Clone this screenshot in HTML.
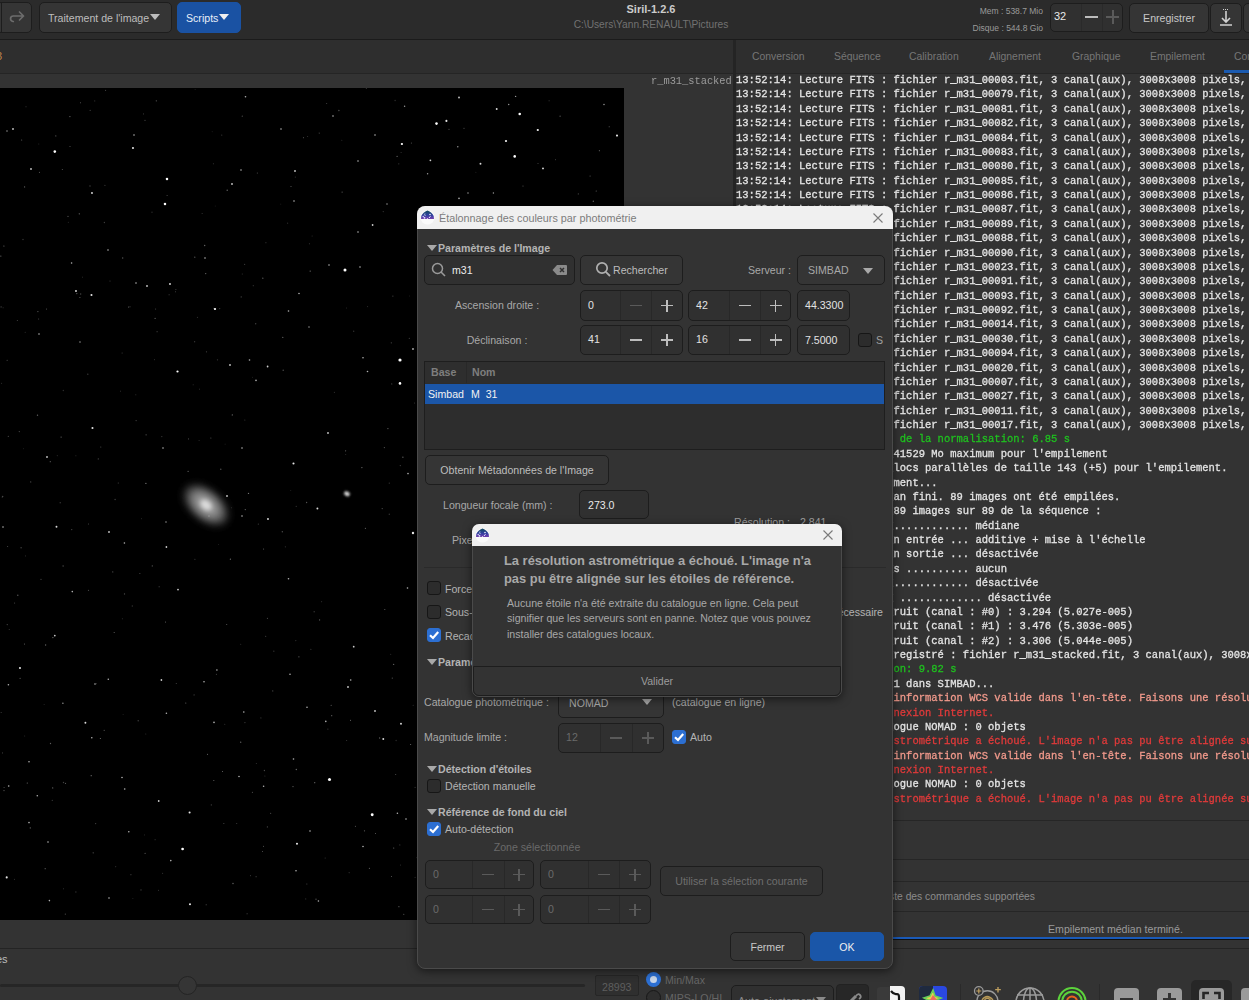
<!DOCTYPE html><html><head><meta charset="utf-8"><style>
*{margin:0;padding:0;box-sizing:border-box}
html,body{width:1249px;height:1000px;overflow:hidden;background:#303030;font-family:"Liberation Sans",sans-serif;font-size:10.6px;color:#c8c8c8}
.a{position:absolute}
.t{position:absolute;white-space:pre;line-height:1}
.btn{position:absolute;border:1px solid #1d1d1d;border-radius:5px;background:#353535;color:#c4c4c4;display:flex;align-items:center;justify-content:center;white-space:pre}
.ent{position:absolute;border:1px solid #1d1d1d;border-radius:5px;background:#2f2f2f;color:#dcdcdc;white-space:pre}
.sep{position:absolute;background:#232323}
.chk{position:absolute;width:14px;height:14px;border:1px solid #161616;border-radius:3px;background:#2c2c2c}
.chk.on{background:#2c6fd2;border-color:#2c6fd2}
.log{position:absolute;left:736px;top:72px;font-family:"Liberation Mono",monospace;font-size:11px;line-height:14.37px;white-space:pre;color:#e4e4e4;font-weight:normal;-webkit-text-stroke:0.3px;transform:scaleX(0.9545);transform-origin:0 0}
.g{color:#1fc01f}.r{color:#e03a3a}.s{color:#f29a8c}
.dlg{position:absolute;background:#333333;border:1px solid #4a4a4a;border-radius:8px;box-shadow:0 2px 10px rgba(0,0,0,.55)}
.ttl{position:absolute;left:0;top:0;right:0;background:#f0f0f0;border-radius:7px 7px 0 0}
.hdr{position:absolute;font-weight:bold;color:#bdbdbd;white-space:pre}
.tri{position:absolute;width:0;height:0;border-left:5px solid transparent;border-right:5px solid transparent;border-top:6px solid #a9a9a9}
</style></head><body><div class="a" style="left:0;top:0;width:1249px;height:39px;background:#2b2b2b"></div>
<div class="a" style="left:0;top:39px;width:1249px;height:1px;background:#1b1b1b"></div>
<div class="btn" style="left:-4px;top:2px;width:36px;height:31px"></div>
<div class="a" style="left:1px;top:3px;width:1px;height:29px;background:#1d1d1d"></div>
<svg class="a" style="left:9px;top:10px" width="17" height="14" viewBox="0 0 17 14"><path d="M4.3 11.5 A2.75 2.75 0 0 1 4.3 6 H14.5 M10.5 2 L14.5 6 L10.5 10" fill="none" stroke="#6c6c6c" stroke-width="1.7" stroke-linecap="round" stroke-linejoin="round"/></svg>
<div class="btn" style="left:39px;top:2px;width:133px;height:31px;justify-content:flex-start;padding-left:8px;color:#bdbdbd">Traitement de l'image</div>
<div class="tri" style="left:150px;top:14px;border-top-color:#bdbdbd"></div>
<div class="btn" style="left:177px;top:2px;width:64px;height:31px;background:#1a52a3;border-color:#1a52a3;justify-content:flex-start;padding-left:8px;color:#e8eef8">Scripts</div>
<div class="tri" style="left:219px;top:14px;border-top-color:#f0f0f0"></div>
<div class="t" style="left:551px;width:200px;top:4px;text-align:center;font-weight:bold;font-size:11px;color:#cccccc">Siril-1.2.6</div>
<div class="t" style="left:551px;width:200px;top:20px;text-align:center;font-size:10.2px;color:#727272">C:\Users\Yann.RENAULT\Pictures</div>
<div class="t" style="left:943px;width:100px;top:7px;text-align:right;font-size:8.5px;color:#9a9a9a">Mem : 538.7 Mio</div>
<div class="t" style="left:943px;width:100px;top:24px;text-align:right;font-size:8.5px;color:#9a9a9a">Disque : 544.8 Gio</div>
<div class="ent" style="left:1050px;top:3px;width:73px;height:29px;background:#303030"></div>
<div class="sep" style="left:1081px;top:4px;width:1px;height:27px;background:#2a2a2a"></div>
<div class="sep" style="left:1102px;top:4px;width:1px;height:27px;background:#2a2a2a"></div>
<div class="t" style="left:1054px;top:11px;font-size:11px;color:#e8e8e8">32</div>
<div class="a" style="left:1085px;top:16px;width:13px;height:2px;background:#bcbcbc"></div>
<div class="a" style="left:1106px;top:16px;width:13px;height:1.5px;background:#5a5a5a"></div>
<div class="a" style="left:1112px;top:10px;width:1.5px;height:14px;background:#5a5a5a"></div>
<div class="btn" style="left:1129px;top:3px;width:80px;height:30px;color:#c8c8c8">Enregistrer</div>
<div class="btn" style="left:1210px;top:3px;width:32px;height:30px"></div>
<svg class="a" style="left:1217px;top:8px" width="18" height="20" viewBox="0 0 18 20"><path d="M9 3 V14 M5 10 L9 14 L13 10 M3 17 H15" fill="none" stroke="#d0d0d0" stroke-width="1.6"/><path d="M6 1.5 H12" stroke="#d0d0d0" stroke-width="1" stroke-dasharray="1 1"/></svg>
<div class="btn" style="left:1243px;top:3px;width:20px;height:30px"></div>
<div class="a" style="left:0;top:40px;width:733px;height:33px;background:#2e2e2e"></div>
<div class="a" style="left:0;top:73px;width:733px;height:1px;background:#252525"></div>
<div class="a" style="left:0;top:74px;width:733px;height:874px;background:#333333"></div>
<div class="t" style="left:-4px;top:51px;font-size:11px;color:#c0864a">3</div>
<div class="t" style="left:651px;top:75px;font-family:'Liberation Mono';font-size:11.5px;color:#9c9c9c;transform:scaleX(0.9);transform-origin:0 0">r_m31_stacked</div>
<svg class="a" style="left:0;top:88px" width="624" height="832" viewBox="0 0 624 832"><defs><filter id="bl" x="-50%" y="-50%" width="200%" height="200%"><feGaussianBlur stdDeviation="4.5"/></filter><filter id="bl2" x="-50%" y="-50%" width="200%" height="200%"><feGaussianBlur stdDeviation="2"/></filter><filter id="bl3" x="-50%" y="-50%" width="200%" height="200%"><feGaussianBlur stdDeviation="1"/></filter></defs><rect width="624" height="832" fill="#000"/><g transform="rotate(40 206 417)"><ellipse cx="206" cy="417" rx="25" ry="14" fill="#555" filter="url(#bl)"/><ellipse cx="206" cy="417" rx="16" ry="9.5" fill="#9a9a9a" filter="url(#bl)"/><ellipse cx="206" cy="417" rx="6.5" ry="4.5" fill="#dcdcdc" filter="url(#bl2)"/></g><ellipse cx="347" cy="405.7" rx="3" ry="2.3" fill="#d0d0d0" filter="url(#bl3)" transform="rotate(30 347 405.7)"/><circle cx="202.1" cy="125.5" r="0.47" fill="rgb(90,90,90)"/><circle cx="334.4" cy="304.3" r="0.58" fill="rgb(49,49,49)"/><circle cx="23.4" cy="360.8" r="0.47" fill="rgb(50,50,50)"/><circle cx="264.9" cy="687.9" r="0.51" fill="rgb(54,54,54)"/><circle cx="391.5" cy="788.5" r="0.55" fill="rgb(85,85,85)"/><circle cx="609.2" cy="38.8" r="0.52" fill="rgb(105,105,105)"/><circle cx="90.0" cy="98.0" r="0.65" fill="rgb(67,67,67)"/><circle cx="112.8" cy="483.9" r="0.54" fill="rgb(89,89,89)"/><circle cx="341.8" cy="52.2" r="0.50" fill="rgb(50,50,50)"/><circle cx="424.6" cy="355.8" r="0.60" fill="rgb(67,67,67)"/><circle cx="282.8" cy="249.4" r="0.62" fill="rgb(100,100,100)"/><circle cx="152.3" cy="477.9" r="0.67" fill="rgb(82,82,82)"/><circle cx="455.2" cy="239.6" r="0.48" fill="rgb(113,113,113)"/><circle cx="260.9" cy="629.9" r="0.57" fill="rgb(56,56,56)"/><circle cx="24.5" cy="556.0" r="0.59" fill="rgb(98,98,98)"/><circle cx="546.3" cy="261.0" r="0.60" fill="rgb(93,93,93)"/><circle cx="361.9" cy="379.6" r="0.69" fill="rgb(103,103,103)"/><circle cx="295.8" cy="552.6" r="0.63" fill="rgb(50,50,50)"/><circle cx="403.8" cy="826.3" r="0.52" fill="rgb(102,102,102)"/><circle cx="240.7" cy="556.3" r="0.57" fill="rgb(47,47,47)"/><circle cx="104.9" cy="97.4" r="0.64" fill="rgb(49,49,49)"/><circle cx="80.7" cy="206.0" r="0.67" fill="rgb(72,72,72)"/><circle cx="50.3" cy="373.7" r="0.67" fill="rgb(83,83,83)"/><circle cx="511.2" cy="718.8" r="0.55" fill="rgb(65,65,65)"/><circle cx="223.9" cy="735.6" r="0.49" fill="rgb(111,111,111)"/><circle cx="110.0" cy="193.0" r="0.57" fill="rgb(61,61,61)"/><circle cx="367.6" cy="218.6" r="0.55" fill="rgb(46,46,46)"/><circle cx="230.4" cy="471.2" r="0.62" fill="rgb(111,111,111)"/><circle cx="321.7" cy="513.8" r="0.46" fill="rgb(92,92,92)"/><circle cx="561.3" cy="648.9" r="0.65" fill="rgb(106,106,106)"/><circle cx="244.8" cy="332.0" r="0.61" fill="rgb(53,53,53)"/><circle cx="38.8" cy="56.0" r="0.49" fill="rgb(60,60,60)"/><circle cx="212.2" cy="43.7" r="0.49" fill="rgb(45,45,45)"/><circle cx="63.3" cy="302.5" r="0.67" fill="rgb(47,47,47)"/><circle cx="383.2" cy="123.6" r="0.54" fill="rgb(63,63,63)"/><circle cx="227.2" cy="102.2" r="0.70" fill="rgb(104,104,104)"/><circle cx="290.8" cy="402.6" r="0.48" fill="rgb(51,51,51)"/><circle cx="213.8" cy="220.3" r="0.49" fill="rgb(102,102,102)"/><circle cx="14.4" cy="791.2" r="0.49" fill="rgb(82,82,82)"/><circle cx="338.9" cy="22.5" r="0.69" fill="rgb(82,82,82)"/><circle cx="538.7" cy="579.2" r="0.54" fill="rgb(63,63,63)"/><circle cx="104.2" cy="642.3" r="0.64" fill="rgb(82,82,82)"/><circle cx="205.7" cy="185.6" r="0.70" fill="rgb(101,101,101)"/><circle cx="532.0" cy="670.7" r="0.63" fill="rgb(102,102,102)"/><circle cx="141.5" cy="430.7" r="0.46" fill="rgb(70,70,70)"/><circle cx="17.4" cy="232.5" r="0.62" fill="rgb(63,63,63)"/><circle cx="596.9" cy="372.1" r="0.70" fill="rgb(110,110,110)"/><circle cx="595.9" cy="303.4" r="0.51" fill="rgb(61,61,61)"/><circle cx="122.7" cy="170.0" r="0.68" fill="rgb(88,88,88)"/><circle cx="524.4" cy="398.9" r="0.65" fill="rgb(90,90,90)"/><circle cx="52.9" cy="549.6" r="0.65" fill="rgb(108,108,108)"/><circle cx="468.1" cy="397.7" r="0.65" fill="rgb(58,58,58)"/><circle cx="207.5" cy="666.3" r="0.55" fill="rgb(112,112,112)"/><circle cx="250.5" cy="787.7" r="0.49" fill="rgb(95,95,95)"/><circle cx="79.3" cy="125.8" r="0.65" fill="rgb(108,108,108)"/><circle cx="91.2" cy="687.7" r="0.61" fill="rgb(113,113,113)"/><circle cx="218.7" cy="456.5" r="0.45" fill="rgb(54,54,54)"/><circle cx="605.8" cy="540.5" r="0.68" fill="rgb(82,82,82)"/><circle cx="270.7" cy="725.3" r="0.50" fill="rgb(102,102,102)"/><circle cx="157.1" cy="243.7" r="0.60" fill="rgb(62,62,62)"/><circle cx="161.8" cy="348.6" r="0.68" fill="rgb(54,54,54)"/><circle cx="220.8" cy="381.2" r="0.68" fill="rgb(86,86,86)"/><circle cx="262.5" cy="763.5" r="0.58" fill="rgb(80,80,80)"/><circle cx="326.7" cy="15.6" r="0.50" fill="rgb(76,76,76)"/><circle cx="2.5" cy="664.9" r="0.57" fill="rgb(57,57,57)"/><circle cx="452.5" cy="463.0" r="0.58" fill="rgb(68,68,68)"/><circle cx="346.6" cy="652.5" r="0.59" fill="rgb(53,53,53)"/><circle cx="155.1" cy="230.4" r="0.58" fill="rgb(99,99,99)"/><circle cx="350.5" cy="632.3" r="0.56" fill="rgb(108,108,108)"/><circle cx="382.2" cy="420.6" r="0.62" fill="rgb(81,81,81)"/><circle cx="282.3" cy="443.7" r="0.69" fill="rgb(78,78,78)"/><circle cx="436.3" cy="729.3" r="0.51" fill="rgb(110,110,110)"/><circle cx="349.1" cy="784.8" r="0.48" fill="rgb(103,103,103)"/><circle cx="75.9" cy="367.8" r="0.51" fill="rgb(50,50,50)"/><circle cx="45.6" cy="557.0" r="0.67" fill="rgb(99,99,99)"/><circle cx="96.4" cy="595.8" r="0.49" fill="rgb(91,91,91)"/><circle cx="550.9" cy="805.0" r="0.69" fill="rgb(61,61,61)"/><circle cx="248.5" cy="405.4" r="0.66" fill="rgb(114,114,114)"/><circle cx="100.8" cy="359.0" r="0.53" fill="rgb(81,81,81)"/><circle cx="122.1" cy="265.0" r="0.45" fill="rgb(95,95,95)"/><circle cx="345.7" cy="366.5" r="0.53" fill="rgb(47,47,47)"/><circle cx="389.3" cy="426.2" r="0.70" fill="rgb(50,50,50)"/><circle cx="491.9" cy="808.5" r="0.52" fill="rgb(53,53,53)"/><circle cx="24.7" cy="648.1" r="0.48" fill="rgb(64,64,64)"/><circle cx="263.5" cy="758.3" r="0.51" fill="rgb(102,102,102)"/><circle cx="93.2" cy="764.8" r="0.63" fill="rgb(85,85,85)"/><circle cx="55.8" cy="47.9" r="0.56" fill="rgb(93,93,93)"/><circle cx="45.2" cy="780.7" r="0.65" fill="rgb(89,89,89)"/><circle cx="52.3" cy="712.4" r="0.67" fill="rgb(50,50,50)"/><circle cx="283.2" cy="282.2" r="0.68" fill="rgb(83,83,83)"/><circle cx="167.1" cy="107.5" r="0.51" fill="rgb(82,82,82)"/><circle cx="68.3" cy="134.3" r="0.50" fill="rgb(49,49,49)"/><circle cx="194.7" cy="253.8" r="0.52" fill="rgb(98,98,98)"/><circle cx="312.1" cy="148.0" r="0.45" fill="rgb(69,69,69)"/><circle cx="156.3" cy="12.8" r="0.59" fill="rgb(96,96,96)"/><circle cx="118.2" cy="395.0" r="0.48" fill="rgb(110,110,110)"/><circle cx="511.0" cy="359.6" r="0.66" fill="rgb(79,79,79)"/><circle cx="245.3" cy="421.6" r="0.70" fill="rgb(93,93,93)"/><circle cx="213.8" cy="692.5" r="0.61" fill="rgb(94,94,94)"/><circle cx="252.5" cy="289.2" r="0.48" fill="rgb(49,49,49)"/><circle cx="44.1" cy="616.4" r="0.49" fill="rgb(63,63,63)"/><circle cx="52.7" cy="699.9" r="0.62" fill="rgb(105,105,105)"/><circle cx="175.9" cy="201.5" r="0.56" fill="rgb(66,66,66)"/><circle cx="98.3" cy="370.9" r="0.69" fill="rgb(64,64,64)"/><circle cx="606.9" cy="455.2" r="0.69" fill="rgb(62,62,62)"/><circle cx="193.2" cy="296.7" r="0.55" fill="rgb(45,45,45)"/><circle cx="296.2" cy="418.3" r="0.58" fill="rgb(59,59,59)"/><circle cx="3.1" cy="219.8" r="0.55" fill="rgb(52,52,52)"/><circle cx="26.0" cy="18.7" r="0.51" fill="rgb(66,66,66)"/><circle cx="365.4" cy="440.3" r="0.61" fill="rgb(97,97,97)"/><circle cx="446.8" cy="731.4" r="0.53" fill="rgb(72,72,72)"/><circle cx="614.5" cy="124.4" r="0.61" fill="rgb(95,95,95)"/><circle cx="27.3" cy="695.0" r="0.61" fill="rgb(107,107,107)"/><circle cx="457.9" cy="675.8" r="0.58" fill="rgb(55,55,55)"/><circle cx="314.7" cy="694.7" r="0.66" fill="rgb(101,101,101)"/><circle cx="364.5" cy="742.8" r="0.62" fill="rgb(92,92,92)"/><circle cx="143.5" cy="25.9" r="0.54" fill="rgb(55,55,55)"/><circle cx="65.5" cy="695.4" r="0.61" fill="rgb(84,84,84)"/><circle cx="390.8" cy="566.3" r="0.45" fill="rgb(79,79,79)"/><circle cx="497.8" cy="622.6" r="0.58" fill="rgb(80,80,80)"/><circle cx="411.4" cy="55.0" r="0.51" fill="rgb(96,96,96)"/><circle cx="46.5" cy="220.9" r="0.50" fill="rgb(96,96,96)"/><circle cx="461.7" cy="811.8" r="0.55" fill="rgb(79,79,79)"/><circle cx="298.9" cy="568.8" r="0.60" fill="rgb(98,98,98)"/><circle cx="401.1" cy="64.5" r="0.51" fill="rgb(56,56,56)"/><circle cx="463.8" cy="253.3" r="0.45" fill="rgb(84,84,84)"/><circle cx="37.9" cy="223.6" r="0.62" fill="rgb(92,92,92)"/><circle cx="421.6" cy="242.0" r="0.57" fill="rgb(81,81,81)"/><circle cx="291.0" cy="98.6" r="0.50" fill="rgb(107,107,107)"/><circle cx="610.4" cy="779.0" r="0.56" fill="rgb(47,47,47)"/><circle cx="511.6" cy="805.5" r="0.52" fill="rgb(76,76,76)"/><circle cx="130.9" cy="786.7" r="0.60" fill="rgb(60,60,60)"/><circle cx="88.4" cy="436.0" r="0.48" fill="rgb(111,111,111)"/><circle cx="511.8" cy="423.3" r="0.63" fill="rgb(106,106,106)"/><circle cx="144.4" cy="746.9" r="0.46" fill="rgb(79,79,79)"/><circle cx="2.2" cy="409.1" r="0.53" fill="rgb(76,76,76)"/><circle cx="87.8" cy="286.2" r="0.66" fill="rgb(67,67,67)"/><circle cx="1.1" cy="624.6" r="0.48" fill="rgb(103,103,103)"/><circle cx="578.1" cy="593.2" r="0.52" fill="rgb(107,107,107)"/><circle cx="232.3" cy="326.9" r="0.60" fill="rgb(114,114,114)"/><circle cx="225.1" cy="356.1" r="0.46" fill="rgb(64,64,64)"/><circle cx="63.5" cy="694.5" r="0.68" fill="rgb(65,65,65)"/><circle cx="155.6" cy="221.1" r="0.50" fill="rgb(81,81,81)"/><circle cx="233.0" cy="795.5" r="0.65" fill="rgb(106,106,106)"/><circle cx="393.7" cy="760.0" r="0.59" fill="rgb(110,110,110)"/><circle cx="449.0" cy="41.2" r="0.56" fill="rgb(96,96,96)"/><circle cx="469.7" cy="536.2" r="0.46" fill="rgb(65,65,65)"/><circle cx="578.3" cy="105.9" r="0.54" fill="rgb(78,78,78)"/><circle cx="185.8" cy="614.9" r="0.52" fill="rgb(113,113,113)"/><circle cx="409.3" cy="250.3" r="0.55" fill="rgb(84,84,84)"/><circle cx="104.4" cy="134.5" r="0.68" fill="rgb(60,60,60)"/><circle cx="310.2" cy="183.1" r="0.70" fill="rgb(108,108,108)"/><circle cx="280.8" cy="116.1" r="0.47" fill="rgb(59,59,59)"/><circle cx="213.4" cy="75.8" r="0.51" fill="rgb(62,62,62)"/><circle cx="355.4" cy="738.2" r="0.55" fill="rgb(97,97,97)"/><circle cx="258.3" cy="436.1" r="0.53" fill="rgb(71,71,71)"/><circle cx="38.7" cy="230.9" r="0.48" fill="rgb(112,112,112)"/><circle cx="314.1" cy="523.8" r="0.50" fill="rgb(105,105,105)"/><circle cx="169.1" cy="206.7" r="0.56" fill="rgb(73,73,73)"/><circle cx="595.3" cy="706.1" r="0.46" fill="rgb(105,105,105)"/><circle cx="20.1" cy="590.3" r="0.57" fill="rgb(107,107,107)"/><circle cx="366.4" cy="0.1" r="0.68" fill="rgb(72,72,72)"/><circle cx="515.2" cy="711.7" r="0.51" fill="rgb(112,112,112)"/><circle cx="68.0" cy="128.4" r="0.62" fill="rgb(81,81,81)"/><circle cx="587.5" cy="600.5" r="0.64" fill="rgb(90,90,90)"/><circle cx="285.4" cy="458.8" r="0.65" fill="rgb(48,48,48)"/><circle cx="145.1" cy="765.4" r="0.53" fill="rgb(90,90,90)"/><circle cx="79.9" cy="209.5" r="0.62" fill="rgb(89,89,89)"/><circle cx="70.0" cy="58.5" r="0.60" fill="rgb(82,82,82)"/><circle cx="242.2" cy="186.0" r="0.45" fill="rgb(87,87,87)"/><circle cx="188.1" cy="383.3" r="0.61" fill="rgb(111,111,111)"/><circle cx="551.5" cy="395.5" r="0.51" fill="rgb(62,62,62)"/><circle cx="599.4" cy="586.3" r="0.46" fill="rgb(67,67,67)"/><circle cx="310.9" cy="561.2" r="0.51" fill="rgb(74,74,74)"/><circle cx="416.4" cy="769.7" r="0.46" fill="rgb(61,61,61)"/><circle cx="210.9" cy="349.9" r="0.50" fill="rgb(92,92,92)"/><circle cx="497.4" cy="615.0" r="0.50" fill="rgb(80,80,80)"/><circle cx="605.2" cy="259.3" r="0.51" fill="rgb(102,102,102)"/><circle cx="138.2" cy="632.7" r="0.69" fill="rgb(66,66,66)"/><circle cx="309.4" cy="155.8" r="0.55" fill="rgb(61,61,61)"/><circle cx="415.1" cy="789.4" r="0.55" fill="rgb(55,55,55)"/><circle cx="132.9" cy="810.5" r="0.46" fill="rgb(55,55,55)"/><circle cx="37.5" cy="327.2" r="0.67" fill="rgb(107,107,107)"/><circle cx="457.2" cy="829.9" r="0.53" fill="rgb(110,110,110)"/><circle cx="115.8" cy="778.7" r="0.46" fill="rgb(97,97,97)"/><circle cx="414.6" cy="315.0" r="0.53" fill="rgb(71,71,71)"/><circle cx="105.6" cy="2.4" r="0.54" fill="rgb(65,65,65)"/><circle cx="596.2" cy="102.9" r="0.50" fill="rgb(112,112,112)"/><circle cx="222.5" cy="683.5" r="0.56" fill="rgb(102,102,102)"/><circle cx="30.7" cy="393.9" r="0.68" fill="rgb(71,71,71)"/><circle cx="120.4" cy="303.1" r="0.46" fill="rgb(107,107,107)"/><circle cx="256.3" cy="675.4" r="0.46" fill="rgb(98,98,98)"/><circle cx="21.7" cy="52.1" r="0.51" fill="rgb(109,109,109)"/><circle cx="466.3" cy="747.6" r="0.52" fill="rgb(69,69,69)"/><circle cx="597.6" cy="513.3" r="0.63" fill="rgb(63,63,63)"/><circle cx="197.5" cy="229.3" r="0.64" fill="rgb(46,46,46)"/><circle cx="571.9" cy="527.5" r="0.46" fill="rgb(110,110,110)"/><circle cx="145.9" cy="395.4" r="0.69" fill="rgb(111,111,111)"/><circle cx="241.2" cy="208.9" r="0.57" fill="rgb(75,75,75)"/><circle cx="579.1" cy="152.2" r="0.63" fill="rgb(101,101,101)"/><circle cx="513.4" cy="643.0" r="0.53" fill="rgb(87,87,87)"/><circle cx="199.4" cy="301.1" r="0.47" fill="rgb(99,99,99)"/><circle cx="123.1" cy="626.4" r="0.47" fill="rgb(62,62,62)"/><circle cx="21.1" cy="459.8" r="0.70" fill="rgb(68,68,68)"/><circle cx="551.3" cy="821.9" r="0.47" fill="rgb(64,64,64)"/><circle cx="60.2" cy="414.7" r="0.56" fill="rgb(94,94,94)"/><circle cx="146.1" cy="346.8" r="0.62" fill="rgb(88,88,88)"/><circle cx="466.7" cy="704.7" r="0.48" fill="rgb(91,91,91)"/><circle cx="524.7" cy="244.4" r="0.54" fill="rgb(84,84,84)"/><circle cx="460.6" cy="165.7" r="0.51" fill="rgb(62,62,62)"/><circle cx="95.7" cy="735.6" r="0.53" fill="rgb(85,85,85)"/><circle cx="247.1" cy="825.7" r="0.51" fill="rgb(80,80,80)"/><circle cx="504.5" cy="543.6" r="0.48" fill="rgb(114,114,114)"/><circle cx="296.3" cy="681.5" r="0.68" fill="rgb(103,103,103)"/><circle cx="25.2" cy="244.3" r="0.50" fill="rgb(54,54,54)"/><circle cx="607.1" cy="485.2" r="0.54" fill="rgb(109,109,109)"/><circle cx="540.5" cy="373.7" r="0.64" fill="rgb(63,63,63)"/><circle cx="590.1" cy="88.0" r="0.60" fill="rgb(86,86,86)"/><circle cx="135.8" cy="306.8" r="0.50" fill="rgb(55,55,55)"/><circle cx="159.1" cy="498.7" r="0.50" fill="rgb(90,90,90)"/><circle cx="7.1" cy="272.3" r="0.50" fill="rgb(92,92,92)"/><circle cx="194.8" cy="169.2" r="0.59" fill="rgb(100,100,100)"/><circle cx="39.5" cy="84.4" r="0.59" fill="rgb(73,73,73)"/><circle cx="398.8" cy="75.8" r="0.62" fill="rgb(57,57,57)"/><circle cx="255.7" cy="235.7" r="0.69" fill="rgb(67,67,67)"/><circle cx="194.9" cy="471.3" r="0.55" fill="rgb(70,70,70)"/><circle cx="539.3" cy="829.2" r="0.50" fill="rgb(70,70,70)"/><circle cx="454.3" cy="169.5" r="0.68" fill="rgb(46,46,46)"/><circle cx="264.4" cy="682.5" r="0.67" fill="rgb(73,73,73)"/><circle cx="287.6" cy="135.2" r="0.59" fill="rgb(46,46,46)"/><circle cx="399.8" cy="756.9" r="0.61" fill="rgb(52,52,52)"/><circle cx="231.4" cy="419.7" r="0.52" fill="rgb(55,55,55)"/><circle cx="325.2" cy="770.0" r="0.57" fill="rgb(53,53,53)"/><circle cx="502.2" cy="804.4" r="0.48" fill="rgb(59,59,59)"/><circle cx="588.5" cy="811.7" r="0.46" fill="rgb(79,79,79)"/><circle cx="577.9" cy="322.7" r="0.61" fill="rgb(108,108,108)"/><circle cx="514.5" cy="133.3" r="0.51" fill="rgb(100,100,100)"/><circle cx="252.4" cy="704.2" r="0.50" fill="rgb(102,102,102)"/><circle cx="136.1" cy="332.6" r="0.55" fill="rgb(81,81,81)"/><circle cx="76.8" cy="205.6" r="0.67" fill="rgb(95,95,95)"/><circle cx="25.6" cy="467.9" r="0.46" fill="rgb(98,98,98)"/><circle cx="523.0" cy="98.0" r="0.59" fill="rgb(87,87,87)"/><circle cx="391.3" cy="254.8" r="0.60" fill="rgb(74,74,74)"/><circle cx="265.7" cy="548.2" r="0.56" fill="rgb(76,76,76)"/><circle cx="14.6" cy="514.9" r="0.51" fill="rgb(79,79,79)"/><circle cx="476.5" cy="648.9" r="0.49" fill="rgb(77,77,77)"/><circle cx="295.3" cy="89.1" r="0.56" fill="rgb(54,54,54)"/><circle cx="57.2" cy="367.7" r="0.46" fill="rgb(81,81,81)"/><circle cx="397.1" cy="68.4" r="0.64" fill="rgb(96,96,96)"/><circle cx="319.2" cy="45.1" r="0.54" fill="rgb(80,80,80)"/><circle cx="593.3" cy="113.3" r="0.70" fill="rgb(104,104,104)"/><circle cx="456.8" cy="678.1" r="0.70" fill="rgb(59,59,59)"/><circle cx="306.9" cy="795.9" r="0.49" fill="rgb(108,108,108)"/><circle cx="492.0" cy="774.2" r="0.54" fill="rgb(50,50,50)"/><circle cx="471.9" cy="132.1" r="0.52" fill="rgb(107,107,107)"/><circle cx="509.0" cy="119.5" r="0.68" fill="rgb(80,80,80)"/><circle cx="130.0" cy="218.7" r="0.53" fill="rgb(80,80,80)"/><circle cx="23.0" cy="151.5" r="0.68" fill="rgb(57,57,57)"/><circle cx="424.1" cy="745.0" r="0.65" fill="rgb(57,57,57)"/><circle cx="71.8" cy="441.6" r="0.54" fill="rgb(89,89,89)"/><circle cx="544.7" cy="461.9" r="0.67" fill="rgb(85,85,85)"/><circle cx="65.3" cy="826.1" r="0.55" fill="rgb(89,89,89)"/><circle cx="497.7" cy="220.3" r="0.59" fill="rgb(114,114,114)"/><circle cx="224.8" cy="636.2" r="0.49" fill="rgb(76,76,76)"/><circle cx="464.0" cy="40.2" r="0.51" fill="rgb(102,102,102)"/><circle cx="398.9" cy="818.7" r="0.62" fill="rgb(86,86,86)"/><circle cx="195.1" cy="1.5" r="0.49" fill="rgb(48,48,48)"/><circle cx="384.4" cy="359.6" r="0.67" fill="rgb(81,81,81)"/><circle cx="82.4" cy="189.1" r="0.46" fill="rgb(90,90,90)"/><circle cx="1.6" cy="295.3" r="0.54" fill="rgb(53,53,53)"/><circle cx="139.9" cy="485.5" r="0.50" fill="rgb(86,86,86)"/><circle cx="389.3" cy="395.1" r="0.68" fill="rgb(55,55,55)"/><circle cx="152.0" cy="124.2" r="0.61" fill="rgb(52,52,52)"/><circle cx="543.7" cy="650.8" r="0.52" fill="rgb(73,73,73)"/><circle cx="7.2" cy="536.6" r="0.54" fill="rgb(84,84,84)"/><circle cx="402.9" cy="369.2" r="0.63" fill="rgb(110,110,110)"/><circle cx="155.1" cy="751.7" r="0.58" fill="rgb(48,48,48)"/><circle cx="253.3" cy="197.7" r="0.64" fill="rgb(49,49,49)"/><circle cx="7.7" cy="458.4" r="0.49" fill="rgb(110,110,110)"/><circle cx="124.5" cy="505.9" r="0.61" fill="rgb(80,80,80)"/><circle cx="507.5" cy="145.3" r="0.53" fill="rgb(67,67,67)"/><circle cx="30.3" cy="739.9" r="0.63" fill="rgb(99,99,99)"/><circle cx="4.0" cy="702.6" r="0.57" fill="rgb(97,97,97)"/><circle cx="462.9" cy="376.5" r="0.48" fill="rgb(61,61,61)"/><circle cx="145.0" cy="32.3" r="0.64" fill="rgb(69,69,69)"/><circle cx="433.7" cy="703.3" r="0.52" fill="rgb(94,94,94)"/><circle cx="345.6" cy="362.8" r="0.58" fill="rgb(100,100,100)"/><circle cx="165.5" cy="534.1" r="0.50" fill="rgb(112,112,112)"/><circle cx="549.1" cy="12.7" r="0.51" fill="rgb(63,63,63)"/><circle cx="464.2" cy="786.0" r="0.53" fill="rgb(97,97,97)"/><circle cx="549.2" cy="273.4" r="0.68" fill="rgb(62,62,62)"/><circle cx="393.6" cy="576.4" r="0.69" fill="rgb(91,91,91)"/><circle cx="293.0" cy="698.6" r="0.66" fill="rgb(93,93,93)"/><circle cx="272.8" cy="602.9" r="0.53" fill="rgb(85,85,85)"/><circle cx="132.3" cy="518.0" r="0.68" fill="rgb(51,51,51)"/><circle cx="90.2" cy="22.4" r="0.68" fill="rgb(53,53,53)"/><circle cx="215.2" cy="118.0" r="0.46" fill="rgb(47,47,47)"/><circle cx="432.2" cy="527.4" r="0.63" fill="rgb(93,93,93)"/><circle cx="41.0" cy="491.3" r="0.65" fill="rgb(70,70,70)"/><circle cx="511.4" cy="741.5" r="0.67" fill="rgb(50,50,50)"/><circle cx="570.6" cy="785.7" r="0.50" fill="rgb(53,53,53)"/><circle cx="69.9" cy="28.6" r="0.65" fill="rgb(104,104,104)"/><circle cx="395.7" cy="686.5" r="0.52" fill="rgb(89,89,89)"/><circle cx="62.3" cy="81.4" r="0.50" fill="rgb(98,98,98)"/><circle cx="199.1" cy="352.6" r="0.51" fill="rgb(47,47,47)"/><circle cx="176.3" cy="595.5" r="0.53" fill="rgb(71,71,71)"/><circle cx="601.5" cy="419.1" r="0.60" fill="rgb(104,104,104)"/><circle cx="19.3" cy="343.6" r="0.64" fill="rgb(75,75,75)"/><circle cx="216.4" cy="586.3" r="0.50" fill="rgb(82,82,82)"/><circle cx="538.0" cy="75.6" r="0.49" fill="rgb(102,102,102)"/><circle cx="0.8" cy="168.1" r="0.69" fill="rgb(98,98,98)"/><circle cx="2.7" cy="408.4" r="0.65" fill="rgb(79,79,79)"/><circle cx="115.1" cy="411.5" r="0.66" fill="rgb(69,69,69)"/><circle cx="162.6" cy="785.3" r="0.50" fill="rgb(65,65,65)"/><circle cx="436.5" cy="414.6" r="0.61" fill="rgb(53,53,53)"/><circle cx="50.5" cy="655.5" r="0.65" fill="rgb(93,93,93)"/><circle cx="391.8" cy="295.9" r="0.55" fill="rgb(73,73,73)"/><circle cx="555.6" cy="71.7" r="0.46" fill="rgb(107,107,107)"/><circle cx="128.6" cy="219.0" r="0.58" fill="rgb(107,107,107)"/><circle cx="236.7" cy="735.5" r="0.57" fill="rgb(61,61,61)"/><circle cx="331.7" cy="627.7" r="0.61" fill="rgb(97,97,97)"/><circle cx="217.5" cy="271.8" r="0.66" fill="rgb(56,56,56)"/><circle cx="413.2" cy="617.3" r="0.56" fill="rgb(57,57,57)"/><circle cx="482.6" cy="481.9" r="0.57" fill="rgb(54,54,54)"/><circle cx="552.3" cy="198.0" r="0.53" fill="rgb(59,59,59)"/><circle cx="438.8" cy="701.9" r="0.49" fill="rgb(56,56,56)"/><circle cx="154.5" cy="271.7" r="0.49" fill="rgb(81,81,81)"/><circle cx="204.7" cy="157.5" r="0.63" fill="rgb(113,113,113)"/><circle cx="63.5" cy="800.7" r="0.55" fill="rgb(52,52,52)"/><circle cx="613.9" cy="661.3" r="0.56" fill="rgb(96,96,96)"/><circle cx="122.4" cy="530.8" r="0.50" fill="rgb(53,53,53)"/><circle cx="242.3" cy="28.2" r="0.65" fill="rgb(73,73,73)"/><circle cx="432.7" cy="416.4" r="0.57" fill="rgb(89,89,89)"/><circle cx="88.5" cy="502.3" r="0.64" fill="rgb(73,73,73)"/><circle cx="566.6" cy="357.8" r="0.64" fill="rgb(85,85,85)"/><circle cx="262.8" cy="190.2" r="0.67" fill="rgb(95,95,95)"/><circle cx="483.0" cy="582.5" r="0.62" fill="rgb(104,104,104)"/><circle cx="400.3" cy="377.6" r="0.61" fill="rgb(67,67,67)"/><circle cx="61.1" cy="349.1" r="0.63" fill="rgb(99,99,99)"/><circle cx="392.9" cy="208.1" r="0.56" fill="rgb(75,75,75)"/><circle cx="387.9" cy="340.6" r="0.68" fill="rgb(92,92,92)"/><circle cx="114.2" cy="544.5" r="0.55" fill="rgb(99,99,99)"/><circle cx="305.7" cy="810.9" r="0.59" fill="rgb(48,48,48)"/><circle cx="100.4" cy="650.5" r="0.58" fill="rgb(110,110,110)"/><circle cx="63.1" cy="478.0" r="0.63" fill="rgb(83,83,83)"/><circle cx="319.6" cy="531.9" r="0.58" fill="rgb(102,102,102)"/><circle cx="256.1" cy="788.7" r="0.62" fill="rgb(60,60,60)"/><circle cx="244.9" cy="634.6" r="0.70" fill="rgb(54,54,54)"/><circle cx="221.8" cy="47.1" r="0.55" fill="rgb(64,64,64)"/><circle cx="8.3" cy="348.3" r="0.62" fill="rgb(74,74,74)"/><circle cx="219.7" cy="220.6" r="0.64" fill="rgb(61,61,61)"/><circle cx="586.5" cy="438.5" r="0.65" fill="rgb(60,60,60)"/><circle cx="244.6" cy="176.4" r="0.64" fill="rgb(54,54,54)"/><circle cx="505.2" cy="527.7" r="0.59" fill="rgb(78,78,78)"/><circle cx="141.0" cy="801.9" r="0.61" fill="rgb(70,70,70)"/><circle cx="510.9" cy="679.1" r="0.52" fill="rgb(78,78,78)"/><circle cx="342.1" cy="104.1" r="0.54" fill="rgb(103,103,103)"/><circle cx="530.8" cy="222.5" r="0.51" fill="rgb(71,71,71)"/><circle cx="265.9" cy="154.7" r="0.63" fill="rgb(46,46,46)"/><circle cx="175.5" cy="203.8" r="0.57" fill="rgb(66,66,66)"/><circle cx="267.4" cy="530.2" r="0.54" fill="rgb(91,91,91)"/><circle cx="579.5" cy="710.9" r="0.66" fill="rgb(49,49,49)"/><circle cx="565.2" cy="652.3" r="0.66" fill="rgb(55,55,55)"/><circle cx="395.1" cy="12.5" r="0.69" fill="rgb(46,46,46)"/><circle cx="409.3" cy="208.0" r="0.49" fill="rgb(52,52,52)"/><circle cx="145.8" cy="645.9" r="0.49" fill="rgb(69,69,69)"/><circle cx="564.2" cy="658.7" r="0.67" fill="rgb(57,57,57)"/><circle cx="379.6" cy="650.0" r="0.67" fill="rgb(91,91,91)"/><circle cx="491.8" cy="697.9" r="0.62" fill="rgb(59,59,59)"/><circle cx="331.2" cy="617.3" r="0.67" fill="rgb(76,76,76)"/><circle cx="346.4" cy="220.1" r="0.48" fill="rgb(62,62,62)"/><circle cx="307.7" cy="48.6" r="0.49" fill="rgb(78,78,78)"/><circle cx="306.6" cy="414.5" r="0.67" fill="rgb(83,83,83)"/><circle cx="4.1" cy="699.5" r="0.59" fill="rgb(78,78,78)"/><circle cx="415.1" cy="699.4" r="0.55" fill="rgb(71,71,71)"/><circle cx="599.4" cy="62.7" r="0.61" fill="rgb(89,89,89)"/><circle cx="17.8" cy="507.2" r="0.68" fill="rgb(92,92,92)"/><circle cx="206.2" cy="816.8" r="0.57" fill="rgb(81,81,81)"/><circle cx="560.1" cy="28.2" r="0.61" fill="rgb(95,95,95)"/><circle cx="211.3" cy="716.9" r="0.57" fill="rgb(71,71,71)"/><circle cx="327.9" cy="641.1" r="0.56" fill="rgb(60,60,60)"/><circle cx="263.6" cy="461.0" r="0.52" fill="rgb(102,102,102)"/><circle cx="516.5" cy="335.9" r="0.52" fill="rgb(80,80,80)"/><circle cx="316.0" cy="811.2" r="0.65" fill="rgb(90,90,90)"/><circle cx="206.5" cy="263.8" r="0.60" fill="rgb(66,66,66)"/><circle cx="396.1" cy="652.5" r="0.63" fill="rgb(48,48,48)"/><circle cx="552.6" cy="453.8" r="0.53" fill="rgb(49,49,49)"/><circle cx="3.9" cy="158.0" r="0.60" fill="rgb(109,109,109)"/><circle cx="410.6" cy="656.5" r="0.60" fill="rgb(108,108,108)"/><circle cx="384.8" cy="521.5" r="0.60" fill="rgb(93,93,93)"/><circle cx="424.9" cy="176.8" r="0.56" fill="rgb(91,91,91)"/><circle cx="475.9" cy="84.3" r="0.46" fill="rgb(58,58,58)"/><circle cx="483.3" cy="760.5" r="0.54" fill="rgb(91,91,91)"/><circle cx="513.3" cy="654.4" r="0.51" fill="rgb(84,84,84)"/><circle cx="188.5" cy="350.9" r="0.56" fill="rgb(67,67,67)"/><circle cx="400.5" cy="777.0" r="0.59" fill="rgb(49,49,49)"/><circle cx="24.6" cy="98.9" r="0.59" fill="rgb(101,101,101)"/><circle cx="573.2" cy="371.5" r="0.55" fill="rgb(46,46,46)"/><circle cx="369.4" cy="780.2" r="0.57" fill="rgb(113,113,113)"/><circle cx="257.3" cy="84.9" r="0.50" fill="rgb(90,90,90)"/><circle cx="94.7" cy="12.9" r="0.62" fill="rgb(46,46,46)"/><circle cx="75.9" cy="804.0" r="0.67" fill="rgb(51,51,51)"/><circle cx="80.5" cy="14.8" r="0.51" fill="rgb(95,95,95)"/><circle cx="457.7" cy="155.9" r="0.64" fill="rgb(49,49,49)"/><circle cx="445.3" cy="711.8" r="0.47" fill="rgb(96,96,96)"/><circle cx="392.3" cy="590.1" r="0.68" fill="rgb(77,77,77)"/><circle cx="158.5" cy="802.3" r="0.45" fill="rgb(95,95,95)"/><circle cx="9.2" cy="541.4" r="0.47" fill="rgb(102,102,102)"/><circle cx="194.1" cy="606.9" r="0.67" fill="rgb(57,57,57)"/><circle cx="303.5" cy="49.7" r="0.59" fill="rgb(71,71,71)"/><circle cx="273.8" cy="563.2" r="0.65" fill="rgb(55,55,55)"/><circle cx="226.7" cy="536.5" r="0.55" fill="rgb(89,89,89)"/><circle cx="240.7" cy="654.2" r="0.65" fill="rgb(110,110,110)"/><circle cx="353.7" cy="243.3" r="0.69" fill="rgb(50,50,50)"/><circle cx="438.8" cy="688.4" r="0.60" fill="rgb(68,68,68)"/><circle cx="609.9" cy="691.6" r="0.53" fill="rgb(87,87,87)"/><circle cx="267.4" cy="738.9" r="0.62" fill="rgb(71,71,71)"/><circle cx="375.5" cy="745.6" r="0.52" fill="rgb(101,101,101)"/><circle cx="1.1" cy="218.9" r="0.60" fill="rgb(74,74,74)"/><circle cx="509.2" cy="738.3" r="0.66" fill="rgb(48,48,48)"/><circle cx="54.8" cy="63.599999999999994" r="1.28" fill="rgb(255,255,255)"/><circle cx="133" cy="60" r="1.04" fill="rgb(229,229,229)"/><circle cx="167" cy="91" r="1.28" fill="rgb(255,255,255)"/><circle cx="165" cy="116" r="1.28" fill="rgb(255,255,255)"/><circle cx="92" cy="105" r="0.96" fill="rgb(216,216,216)"/><circle cx="31" cy="81" r="0.88" fill="rgb(204,204,204)"/><circle cx="13" cy="41" r="0.88" fill="rgb(204,204,204)"/><circle cx="7" cy="43" r="0.72" fill="rgb(153,153,153)"/><circle cx="134" cy="47" r="0.80" fill="rgb(178,178,178)"/><circle cx="345" cy="182" r="1.52" fill="rgb(255,255,255)"/><circle cx="400" cy="272" r="1.60" fill="rgb(255,255,255)"/><circle cx="402" cy="56" r="0.96" fill="rgb(216,216,216)"/><circle cx="358" cy="73" r="0.80" fill="rgb(178,178,178)"/><circle cx="295" cy="83" r="0.88" fill="rgb(204,204,204)"/><circle cx="333" cy="28" r="0.80" fill="rgb(178,178,178)"/><circle cx="375" cy="47" r="0.80" fill="rgb(178,178,178)"/><circle cx="281" cy="41" r="0.80" fill="rgb(178,178,178)"/><circle cx="232" cy="96" r="0.88" fill="rgb(204,204,204)"/><circle cx="241" cy="82" r="0.80" fill="rgb(178,178,178)"/><circle cx="387" cy="116" r="0.72" fill="rgb(153,153,153)"/><circle cx="372.6" cy="137" r="0.88" fill="rgb(204,204,204)"/><circle cx="294" cy="113" r="0.80" fill="rgb(178,178,178)"/><circle cx="76" cy="203" r="0.96" fill="rgb(216,216,216)"/><circle cx="91.5" cy="207" r="1.04" fill="rgb(229,229,229)"/><circle cx="215" cy="221" r="1.12" fill="rgb(255,255,255)"/><circle cx="170" cy="196" r="0.96" fill="rgb(216,216,216)"/><circle cx="147" cy="198" r="0.88" fill="rgb(204,204,204)"/><circle cx="136" cy="195" r="0.80" fill="rgb(178,178,178)"/><circle cx="360" cy="179" r="0.80" fill="rgb(178,178,178)"/><circle cx="329" cy="177" r="0.80" fill="rgb(178,178,178)"/><circle cx="299" cy="205.5" r="0.80" fill="rgb(178,178,178)"/><circle cx="288.5" cy="223" r="0.80" fill="rgb(178,178,178)"/><circle cx="39" cy="246" r="0.80" fill="rgb(178,178,178)"/><circle cx="177.5" cy="283.5" r="1.12" fill="rgb(255,255,255)"/><circle cx="230" cy="277" r="0.88" fill="rgb(204,204,204)"/><circle cx="249.5" cy="272" r="0.80" fill="rgb(178,178,178)"/><circle cx="267.6" cy="278.5" r="0.88" fill="rgb(204,204,204)"/><circle cx="413" cy="261" r="0.88" fill="rgb(204,204,204)"/><circle cx="363" cy="269.7" r="0.80" fill="rgb(178,178,178)"/><circle cx="367.5" cy="283.5" r="0.80" fill="rgb(178,178,178)"/><circle cx="108" cy="162" r="0.80" fill="rgb(178,178,178)"/><circle cx="71.6" cy="175" r="0.80" fill="rgb(178,178,178)"/><circle cx="205" cy="170" r="0.80" fill="rgb(178,178,178)"/><circle cx="309" cy="239" r="0.72" fill="rgb(153,153,153)"/><circle cx="80" cy="254" r="0.72" fill="rgb(153,153,153)"/><circle cx="245.5" cy="8.799999999999997" r="0.80" fill="rgb(178,178,178)"/><circle cx="358" cy="144" r="0.80" fill="rgb(178,178,178)"/><circle cx="436.5" cy="35.599999999999994" r="1.28" fill="rgb(255,255,255)"/><circle cx="446.4" cy="32.900000000000006" r="1.04" fill="rgb(229,229,229)"/><circle cx="459" cy="9.5" r="0.88" fill="rgb(204,204,204)"/><circle cx="519.7" cy="26" r="1.28" fill="rgb(255,255,255)"/><circle cx="496.7" cy="21" r="0.96" fill="rgb(216,216,216)"/><circle cx="537.8" cy="42" r="1.12" fill="rgb(242,242,242)"/><circle cx="506" cy="53" r="1.12" fill="rgb(242,242,242)"/><circle cx="514.7" cy="68.4" r="1.28" fill="rgb(255,255,255)"/><circle cx="617" cy="47.599999999999994" r="1.04" fill="rgb(229,229,229)"/><circle cx="543" cy="80.4" r="0.96" fill="rgb(216,216,216)"/><circle cx="401.8" cy="56" r="1.04" fill="rgb(229,229,229)"/><circle cx="430.4" cy="72.30000000000001" r="0.88" fill="rgb(204,204,204)"/><circle cx="480.5" cy="75.80000000000001" r="0.96" fill="rgb(216,216,216)"/><circle cx="508.7" cy="16.5" r="0.72" fill="rgb(153,153,153)"/><circle cx="515.6" cy="8.400000000000006" r="0.72" fill="rgb(153,153,153)"/><circle cx="459" cy="110.4" r="0.80" fill="rgb(178,178,178)"/><circle cx="404.6" cy="18.299999999999997" r="0.72" fill="rgb(153,153,153)"/><circle cx="427.6" cy="85.69999999999999" r="0.72" fill="rgb(153,153,153)"/><circle cx="468" cy="105" r="0.72" fill="rgb(153,153,153)"/><circle cx="493.4" cy="105" r="0.72" fill="rgb(153,153,153)"/><circle cx="604" cy="16.5" r="0.72" fill="rgb(153,153,153)"/><circle cx="457.8" cy="58.69999999999999" r="0.72" fill="rgb(153,153,153)"/><circle cx="400" cy="295.4" r="1.28" fill="rgb(255,255,255)"/><circle cx="92.5" cy="340" r="1.04" fill="rgb(229,229,229)"/><circle cx="47" cy="369" r="0.88" fill="rgb(204,204,204)"/><circle cx="293.5" cy="375.5" r="1.04" fill="rgb(229,229,229)"/><circle cx="328" cy="345" r="0.88" fill="rgb(204,204,204)"/><circle cx="317.4" cy="420.5" r="0.96" fill="rgb(216,216,216)"/><circle cx="268" cy="431" r="0.96" fill="rgb(216,216,216)"/><circle cx="413" cy="445" r="1.20" fill="rgb(255,255,255)"/><circle cx="56.5" cy="438.70000000000005" r="0.96" fill="rgb(216,216,216)"/><circle cx="109" cy="444" r="0.88" fill="rgb(204,204,204)"/><circle cx="166.4" cy="459" r="0.88" fill="rgb(204,204,204)"/><circle cx="178" cy="501.6" r="0.88" fill="rgb(204,204,204)"/><circle cx="54.8" cy="547.6" r="0.88" fill="rgb(204,204,204)"/><circle cx="163" cy="360" r="0.80" fill="rgb(178,178,178)"/><circle cx="256" cy="292.4" r="0.80" fill="rgb(178,178,178)"/><circle cx="242" cy="360" r="0.80" fill="rgb(178,178,178)"/><circle cx="288.5" cy="490.79999999999995" r="0.80" fill="rgb(178,178,178)"/><circle cx="72.3" cy="503.6" r="0.80" fill="rgb(178,178,178)"/><circle cx="124.4" cy="455" r="0.80" fill="rgb(178,178,178)"/><circle cx="242" cy="428" r="0.80" fill="rgb(178,178,178)"/><circle cx="407.5" cy="500" r="0.80" fill="rgb(178,178,178)"/><circle cx="3" cy="439" r="0.80" fill="rgb(178,178,178)"/><circle cx="408" cy="385.6" r="0.80" fill="rgb(178,178,178)"/><circle cx="329.5" cy="691.5" r="1.52" fill="rgb(255,255,255)"/><circle cx="372.2" cy="726.8" r="1.44" fill="rgb(255,255,255)"/><circle cx="182.6" cy="761" r="1.36" fill="rgb(255,255,255)"/><circle cx="189.6" cy="724.5" r="1.04" fill="rgb(229,229,229)"/><circle cx="297" cy="755.8" r="1.04" fill="rgb(229,229,229)"/><circle cx="190" cy="816.3" r="1.04" fill="rgb(229,229,229)"/><circle cx="20" cy="580" r="1.04" fill="rgb(229,229,229)"/><circle cx="6.7" cy="789.4" r="1.04" fill="rgb(229,229,229)"/><circle cx="85.4" cy="634.7" r="0.96" fill="rgb(216,216,216)"/><circle cx="383.3" cy="651" r="0.96" fill="rgb(216,216,216)"/><circle cx="401" cy="635.7" r="0.96" fill="rgb(216,216,216)"/><circle cx="353.7" cy="558.7" r="0.88" fill="rgb(204,204,204)"/><circle cx="375" cy="623" r="0.88" fill="rgb(204,204,204)"/><circle cx="348" cy="599" r="0.88" fill="rgb(204,204,204)"/><circle cx="350.7" cy="592" r="0.80" fill="rgb(178,178,178)"/><circle cx="325.8" cy="633.4" r="0.80" fill="rgb(178,178,178)"/><circle cx="293.5" cy="671" r="0.80" fill="rgb(178,178,178)"/><circle cx="239" cy="688.5" r="0.80" fill="rgb(178,178,178)"/><circle cx="263.6" cy="698.3" r="0.80" fill="rgb(178,178,178)"/><circle cx="158.7" cy="713" r="0.88" fill="rgb(204,204,204)"/><circle cx="122" cy="689.5" r="0.80" fill="rgb(178,178,178)"/><circle cx="124.7" cy="701" r="0.80" fill="rgb(178,178,178)"/><circle cx="161.4" cy="592" r="0.88" fill="rgb(204,204,204)"/><circle cx="216.9" cy="582" r="0.80" fill="rgb(178,178,178)"/><circle cx="108.3" cy="591.3" r="0.80" fill="rgb(178,178,178)"/><circle cx="95" cy="596" r="0.80" fill="rgb(178,178,178)"/><circle cx="166.4" cy="625.3" r="0.80" fill="rgb(178,178,178)"/><circle cx="204" cy="593.7" r="0.80" fill="rgb(178,178,178)"/><circle cx="290" cy="586.3" r="0.80" fill="rgb(178,178,178)"/><circle cx="307" cy="619.3" r="0.80" fill="rgb(178,178,178)"/><circle cx="243.8" cy="624" r="0.80" fill="rgb(178,178,178)"/><circle cx="128.8" cy="743.7" r="0.80" fill="rgb(178,178,178)"/><circle cx="363" cy="758.5" r="0.80" fill="rgb(178,178,178)"/><circle cx="296" cy="782.7" r="0.80" fill="rgb(178,178,178)"/><circle cx="318.4" cy="813" r="0.80" fill="rgb(178,178,178)"/><circle cx="109" cy="810" r="0.80" fill="rgb(178,178,178)"/><circle cx="49.4" cy="812.6" r="0.80" fill="rgb(178,178,178)"/><circle cx="29" cy="734.6" r="0.80" fill="rgb(178,178,178)"/><circle cx="37.3" cy="707.7" r="0.80" fill="rgb(178,178,178)"/><circle cx="8.7" cy="698" r="0.80" fill="rgb(178,178,178)"/><circle cx="29" cy="673.7" r="0.80" fill="rgb(178,178,178)"/><circle cx="8.4" cy="596.7" r="0.80" fill="rgb(178,178,178)"/><circle cx="62.9" cy="615.2" r="0.72" fill="rgb(153,153,153)"/><circle cx="397.4" cy="725.2" r="0.80" fill="rgb(178,178,178)"/><circle cx="406" cy="731" r="0.80" fill="rgb(178,178,178)"/><circle cx="310" cy="743" r="0.80" fill="rgb(178,178,178)"/><circle cx="170.8" cy="772.6" r="0.80" fill="rgb(178,178,178)"/><circle cx="48" cy="754" r="0.80" fill="rgb(178,178,178)"/><circle cx="214" cy="634.4" r="0.80" fill="rgb(178,178,178)"/><circle cx="91.8" cy="649.8" r="0.80" fill="rgb(178,178,178)"/><circle cx="227" cy="408" r="0.88" fill="rgb(204,204,204)"/><circle cx="209" cy="428" r="0.72" fill="rgb(153,153,153)"/><circle cx="166" cy="434" r="0.72" fill="rgb(153,153,153)"/></svg>
<div class="a" style="left:733px;top:40px;width:3px;height:908px;background:#242424"></div>
<div class="a" style="left:736px;top:40px;width:513px;height:33px;background:#2e2e2e"></div>
<div class="a" style="left:736px;top:73px;width:513px;height:1px;background:#262626"></div>
<div class="a" style="left:736px;top:74px;width:513px;height:874px;background:#333333"></div>
<div class="t" style="left:752px;top:52px;font-size:10.4px;color:#767676">Conversion</div>
<div class="t" style="left:834px;top:52px;font-size:10.4px;color:#767676">Séquence</div>
<div class="t" style="left:909px;top:52px;font-size:10.4px;color:#767676">Calibration</div>
<div class="t" style="left:989px;top:52px;font-size:10.4px;color:#767676">Alignement</div>
<div class="t" style="left:1072px;top:52px;font-size:10.4px;color:#767676">Graphique</div>
<div class="t" style="left:1150px;top:52px;font-size:10.4px;color:#767676">Empilement</div>
<div class="t" style="left:1234px;top:52px;font-size:10.4px;color:#767676">Console</div>
<div class="a" style="left:1224px;top:70px;width:25px;height:3px;background:#1a5ab0"></div>
<div class="a" style="left:736px;top:74px;width:513px;height:746px;overflow:hidden"><div class="log" style="left:0;top:-1px">13:52:14: Lecture FITS : fichier r_m31_00003.fit, 3 canal(aux), 3008x3008 pixels, 32 bits
13:52:14: Lecture FITS : fichier r_m31_00079.fit, 3 canal(aux), 3008x3008 pixels, 32 bits
13:52:14: Lecture FITS : fichier r_m31_00081.fit, 3 canal(aux), 3008x3008 pixels, 32 bits
13:52:14: Lecture FITS : fichier r_m31_00082.fit, 3 canal(aux), 3008x3008 pixels, 32 bits
13:52:14: Lecture FITS : fichier r_m31_00084.fit, 3 canal(aux), 3008x3008 pixels, 32 bits
13:52:14: Lecture FITS : fichier r_m31_00083.fit, 3 canal(aux), 3008x3008 pixels, 32 bits
13:52:14: Lecture FITS : fichier r_m31_00080.fit, 3 canal(aux), 3008x3008 pixels, 32 bits
13:52:14: Lecture FITS : fichier r_m31_00085.fit, 3 canal(aux), 3008x3008 pixels, 32 bits
13:52:14: Lecture FITS : fichier r_m31_00086.fit, 3 canal(aux), 3008x3008 pixels, 32 bits
13:52:14: Lecture FITS : fichier r_m31_00087.fit, 3 canal(aux), 3008x3008 pixels, 32 bits
13:52:14: Lecture FITS : fichier r_m31_00089.fit, 3 canal(aux), 3008x3008 pixels, 32 bits
13:52:14: Lecture FITS : fichier r_m31_00088.fit, 3 canal(aux), 3008x3008 pixels, 32 bits
13:52:14: Lecture FITS : fichier r_m31_00090.fit, 3 canal(aux), 3008x3008 pixels, 32 bits
13:52:14: Lecture FITS : fichier r_m31_00023.fit, 3 canal(aux), 3008x3008 pixels, 32 bits
13:52:14: Lecture FITS : fichier r_m31_00091.fit, 3 canal(aux), 3008x3008 pixels, 32 bits
13:52:14: Lecture FITS : fichier r_m31_00093.fit, 3 canal(aux), 3008x3008 pixels, 32 bits
13:52:14: Lecture FITS : fichier r_m31_00092.fit, 3 canal(aux), 3008x3008 pixels, 32 bits
13:52:14: Lecture FITS : fichier r_m31_00014.fit, 3 canal(aux), 3008x3008 pixels, 32 bits
13:52:14: Lecture FITS : fichier r_m31_00030.fit, 3 canal(aux), 3008x3008 pixels, 32 bits
13:52:14: Lecture FITS : fichier r_m31_00094.fit, 3 canal(aux), 3008x3008 pixels, 32 bits
13:52:14: Lecture FITS : fichier r_m31_00020.fit, 3 canal(aux), 3008x3008 pixels, 32 bits
13:52:14: Lecture FITS : fichier r_m31_00007.fit, 3 canal(aux), 3008x3008 pixels, 32 bits
13:52:14: Lecture FITS : fichier r_m31_00027.fit, 3 canal(aux), 3008x3008 pixels, 32 bits
13:52:14: Lecture FITS : fichier r_m31_00011.fit, 3 canal(aux), 3008x3008 pixels, 32 bits
13:52:14: Lecture FITS : fichier r_m31_00017.fit, 3 canal(aux), 3008x3008 pixels, 32 bits
<span class="g">13:52:14: Xxxxxxxxxxxxxxx de la normalisation: 6.85 s</span>
13:52:14: Xxxxxxxxxxxxxxx41529 Mo maximum pour l'empilement
13:52:14: Xxxxxxxxxxxxxxxlocs parallèles de taille 143 (+5) pour l'empilement.
13:52:14: Xxxxxxxxxxxxxxxment...
13:52:14: Xxxxxxxxxxxxxxxan fini. 89 images ont été empilées.
13:52:14: Xxxxxxxxxxxxxxx89 images sur 89 de la séquence :
13:52:14: Xxxxxxxxxxxxxxx............ médiane
13:52:14: Xxxxxxxxxxxxxxxn entrée ... additive + mise à l'échelle
13:52:14: Xxxxxxxxxxxxxxxn sortie ... désactivée
13:52:14: Xxxxxxxxxxxxxxxs .......... aucun
13:52:14: Xxxxxxxxxxxxxxx............ désactivée
13:52:14: Xxxxxxxxxxxxxxx ............. désactivée
13:52:14: Xxxxxxxxxxxxxxxruit (canal : #0) : 3.294 (5.027e-005)
13:52:14: Xxxxxxxxxxxxxxxruit (canal : #1) : 3.476 (5.303e-005)
13:52:14: Xxxxxxxxxxxxxxxruit (canal : #2) : 3.306 (5.044e-005)
13:52:14: Xxxxxxxxxxxxxxxregistré : fichier r_m31_stacked.fit, 3 canal(aux), 3008x3008 pixels, 32 bits
<span class="g">13:52:14: Xxxxxxxxxxxxxxxon: 9.82 s</span>
13:52:14: Xxxxxxxxxxxxxxx1 dans SIMBAD...
<span class="s">13:52:14: Xxxxxxxxxxxxxxxinformation WCS valide dans l'en-tête. Faisons une résolution astrométrique</span>
<span class="r">13:52:14: Xxxxxxxxxxxxxxxnexion Internet.</span>
13:52:14: Xxxxxxxxxxxxxxxogue NOMAD : 0 objets
<span class="r">13:52:14: Xxxxxxxxxxxxxxxstrométrique a échoué. L'image n'a pas pu être alignée sur les étoiles de référence.</span>
<span class="s">13:52:14: Xxxxxxxxxxxxxxxinformation WCS valide dans l'en-tête. Faisons une résolution astrométrique</span>
<span class="r">13:52:14: Xxxxxxxxxxxxxxxnexion Internet.</span>
13:52:14: Xxxxxxxxxxxxxxxogue NOMAD : 0 objets
<span class="r">13:52:14: Xxxxxxxxxxxxxxxstrométrique a échoué. L'image n'a pas pu être alignée sur les étoiles de référence.</span></div></div>
<div class="a" style="left:736px;top:820px;width:513px;height:1px;background:#262626"></div>
<div class="a" style="left:736px;top:859px;width:513px;height:1px;background:#262626"></div>
<div class="a" style="left:736px;top:881px;width:513px;height:1px;background:#262626"></div>
<div class="t" style="left:835px;width:200px;top:892px;text-align:right;font-size:10.3px;color:#8c8c8c">Liste des commandes supportées</div>
<div class="a" style="left:736px;top:911px;width:513px;height:1px;background:#262626"></div>
<div class="t" style="left:1048px;top:924px;font-size:10.6px;color:#9a9a9a">Empilement médian terminé.</div>
<div class="a" style="left:736px;top:937px;width:513px;height:2px;background:#1a5ab8"></div>
<div class="a" style="left:736px;top:939px;width:513px;height:1px;background:#111"></div>
<div class="a" style="left:0;top:948px;width:1249px;height:1px;background:#242424"></div>
<div class="a" style="left:0;top:949px;width:1249px;height:51px;background:#333333"></div>
<div class="t" style="left:-4px;top:954px;font-size:11px;color:#bdbdbd">es</div>
<div class="a" style="left:0;top:984px;width:585px;height:3px;background:#262626;border-radius:2px"></div>
<div class="a" style="left:178px;top:976px;width:19px;height:19px;border-radius:50%;border:1.5px solid #242424;background:#353535"></div>
<div class="ent" style="left:595px;top:975px;width:44px;height:21px;border-color:#262626;border-radius:2px;background:#2f2f2f;color:#5e5e5e;font-size:10.6px;padding:5px 0 0 6px">28993</div>
<div class="a" style="left:646px;top:972px;width:15px;height:15px;border-radius:50%;background:#2c6fd2"></div>
<div class="a" style="left:650px;top:976px;width:7px;height:7px;border-radius:50%;background:#c8d6ea"></div>
<div class="t" style="left:665px;top:975px;font-size:10.6px;color:#666">Min/Max</div>
<div class="a" style="left:646px;top:990px;width:15px;height:15px;border-radius:50%;border:1.5px solid #181818;background:#2e2e2e"></div>
<div class="t" style="left:665px;top:993px;font-size:10.6px;color:#666">MIPS-LO/HI</div>
<div class="btn" style="left:731px;top:985px;width:103px;height:30px;background:#303030"></div>
<div class="t" style="left:738px;top:996.2px;font-size:10.6px;color:#8a8a8a;">Auto-ajustement</div>
<div class="tri" style="left:816px;top:997px;border-top-color:#8a8a8a"></div>
<div class="a" style="left:836px;top:984px;width:33px;height:30px;background:#272727;border:1px solid #222;border-radius:4px"></div>
<svg class="a" style="left:845px;top:990px" width="20" height="14"><path d="M3 14 L11 6" stroke="#8a8a8a" stroke-width="3"/><path d="M11 6 Q13 3 15 5 Q17 7 14 9" fill="none" stroke="#8a8a8a" stroke-width="1.8"/></svg>
<div class="a" style="left:877px;top:987px;width:14px;height:20px;background:#3a3a3a;border-radius:3px 0 0 3px"></div>
<div class="a" style="left:890px;top:986px;width:15px;height:20px;background:#f2f2f2;border-radius:0 4px 0 0"></div>
<svg class="a" style="left:885px;top:986px" width="20" height="14"><path d="M6 5 Q9 9 12 8 Q14 8 14 11 L14 14" fill="none" stroke="#151515" stroke-width="2.2"/></svg>
<div class="a" style="left:919px;top:986px;width:28px;height:20px;background:#2a48e0;border-radius:4px"></div>
<div class="a" style="left:919px;top:986px;width:14px;height:20px;background:#1f2a3f;border-radius:4px 0 0 4px"></div>
<svg class="a" style="left:919px;top:986px" width="28" height="14"><path d="M14 4 L16 10 L22 12 L17 14 L9 14 L5 12 L11 10 Z" fill="#e8d050" stroke="#6ad058" stroke-width="1.6"/><path d="M11 14 L14 9 L18 14" fill="#e86a60"/></svg>
<div class="a" style="left:960px;top:984px;width:1px;height:16px;background:#2a2a2a"></div>
<svg class="a" style="left:970px;top:984px" width="34" height="16"><circle cx="17.4" cy="17.3" r="10.5" fill="none" stroke="#9a9a9a" stroke-width="1.4"/><circle cx="8.8" cy="7" r="4.3" fill="#333" stroke="#9a9a9a" stroke-width="1.3"/><path d="M8.8 4.5 V9.5 M6.3 7 H11.3" stroke="#c0a060" stroke-width="1.2"/><path d="M28 3 V8.5 M25.2 5.7 H30.8" stroke="#c0a060" stroke-width="1.3"/><path d="M12 16 Q17 9 23 16 M14.5 16 Q17 12.5 20.5 16" fill="none" stroke="#b89a58" stroke-width="1.3"/></svg>
<svg class="a" style="left:1014px;top:986px" width="32" height="14"><circle cx="16" cy="16" r="14" fill="none" stroke="#9c9c9c" stroke-width="1.5"/><ellipse cx="16" cy="16" rx="6.5" ry="14" fill="none" stroke="#9c9c9c" stroke-width="1.5"/><path d="M16 2 V14 M3 9 H29" stroke="#9c9c9c" stroke-width="1.5"/></svg>
<svg class="a" style="left:1056px;top:986px" width="32" height="14"><circle cx="16" cy="15.5" r="13.5" fill="none" stroke="#5cd23c" stroke-width="2"/><circle cx="16" cy="15.5" r="9.8" fill="none" stroke="#5cd23c" stroke-width="2"/><circle cx="16" cy="15.5" r="5" fill="none" stroke="#e8641c" stroke-width="2"/></svg>
<div class="a" style="left:1099px;top:984px;width:1px;height:16px;background:#2a2a2a"></div>
<div class="a" style="left:1114px;top:988px;width:25px;height:20px;background:#9a9a9a;border-radius:4px"></div>
<div class="a" style="left:1120px;top:998px;width:13px;height:2.5px;background:#333"></div>
<div class="a" style="left:1157px;top:988px;width:25px;height:20px;background:#9a9a9a;border-radius:4px"></div>
<div class="a" style="left:1168px;top:993px;width:2.5px;height:10px;background:#333"></div>
<div class="a" style="left:1163px;top:998px;width:13px;height:2.5px;background:#333"></div>
<div class="a" style="left:1191px;top:980px;width:41px;height:24px;background:#272727;border-radius:5px"></div>
<div class="a" style="left:1199px;top:988px;width:25px;height:20px;background:#9a9a9a;border-radius:4px"></div>
<svg class="a" style="left:1199px;top:988px" width="25" height="12"><path d="M4.5 11 V5 H10 M15 5 H20.5 V11" fill="none" stroke="#262626" stroke-width="2.6"/></svg>
<div class="a" style="left:1241px;top:988px;width:15px;height:20px;background:#9a9a9a;border-radius:4px"></div>
<div class="dlg" style="left:417px;top:206px;width:476px;height:763px"></div>
<div class="a" style="left:417px;top:206px;width:476px;height:23px;background:#f0f0f0;border-radius:8px 8px 0 0"></div>
<svg class="a" style="left:420px;top:210px" width="15" height="15" viewBox="0 0 15 15"><defs><linearGradient id="ig" x1="0" y1="0" x2="0" y2="1"><stop offset="0" stop-color="#0f4a5a"/><stop offset="0.55" stop-color="#3040a0"/><stop offset="1" stop-color="#7440b0"/></linearGradient></defs><circle cx="7.5" cy="7.5" r="7" fill="#fafafa"/><path d="M1 9 L1.3 6 Q3 2 7.5 0.5 Q12 2 13.7 6 L14 9 H8.3 L7.5 8 L6.7 9 Z" fill="url(#ig)"/><path d="M5 3.5 Q4 5 5.5 6" fill="none" stroke="#c0d0e0" stroke-width=".9"/><circle cx="10" cy="4.5" r=".8" fill="#f0f0ff"/><circle cx="3.2" cy="6.5" r=".7" fill="#e0e0ff"/><circle cx="4.5" cy="7.8" r=".9" fill="#e8e8ff"/><path d="M9 8 L10.5 6.2" stroke="#e8e8ff" stroke-width="1"/></svg>
<div class="t" style="left:439px;top:213.2px;font-size:10.8px;color:#7c7c7c;">Étalonnage des couleurs par photométrie</div>
<svg class="a" style="left:873px;top:213px" width="10" height="10"><path d="M0.5 0.5 L9.5 9.5 M9.5 0.5 L0.5 9.5" stroke="#7a7a7a" stroke-width="1.1"/></svg>
<div class="tri" style="left:427px;top:245px;border-top-color:#a9a9a9"></div>
<div class="t" style="left:438px;top:243.2px;font-size:10.6px;color:#b4b4b4;font-weight:bold">Paramètres de l'Image</div>
<div class="ent" style="left:424px;top:255px;width:151px;height:30px;background:#303030"></div>
<svg class="a" style="left:431px;top:262px" width="16" height="16"><circle cx="6.5" cy="6.5" r="5" fill="none" stroke="#9a9a9a" stroke-width="1.5"/><path d="M10 10 L14 14" stroke="#9a9a9a" stroke-width="1.6"/></svg>
<div class="t" style="left:452px;top:265.2px;font-size:10.6px;color:#ececec;">m31</div>
<svg class="a" style="left:552px;top:264px" width="16" height="12"><path d="M5 1 H14 Q15 1 15 2 V10 Q15 11 14 11 H5 L0.5 6 Z" fill="#8a8a8a"/><path d="M8 4 L12 8 M12 4 L8 8" stroke="#303030" stroke-width="1.5"/></svg>
<div class="btn" style="left:580px;top:255px;width:103px;height:30px;justify-content:flex-start;padding-left:32px;color:#bdbdbd">Rechercher</div>
<svg class="a" style="left:595px;top:261px" width="17" height="17"><circle cx="7" cy="7" r="5.2" fill="none" stroke="#b0b0b0" stroke-width="1.7"/><path d="M10.8 10.8 L15 15" stroke="#b0b0b0" stroke-width="1.8"/></svg>
<div class="t" style="left:691px;top:265.2px;font-size:10.6px;color:#a8a8a8;width:100px;text-align:right">Serveur :</div>
<div class="btn" style="left:797px;top:255px;width:88px;height:30px;justify-content:flex-start;padding-left:10px;color:#a8a8a8">SIMBAD</div>
<div class="tri" style="left:863px;top:268px;border-top-color:#a9a9a9"></div>
<div class="t" style="left:397px;top:300.2px;font-size:10.6px;color:#a8a8a8;width:200px;text-align:center">Ascension droite :</div>
<div class="ent" style="left:580px;top:290px;width:103px;height:31px;background:#303030"></div><div class="sep" style="left:620px;top:291px;width:1px;height:29px;background:#282828"></div><div class="sep" style="left:651px;top:291px;width:1px;height:29px;background:#282828"></div><div class="t" style="left:588px;top:299.5px;font-size:10.6px;color:#e2e2e2">0</div><div class="a" style="left:629.5px;top:304.75px;width:12px;height:1.5px;background:#5a5a5a"></div><div class="a" style="left:661.0px;top:304.75px;width:12px;height:1.5px;background:#bdbdbd"></div><div class="a" style="left:666.25px;top:299.5px;width:1.5px;height:12px;background:#bdbdbd"></div>
<div class="ent" style="left:688px;top:290px;width:103px;height:31px;background:#303030"></div><div class="sep" style="left:729px;top:291px;width:1px;height:29px;background:#282828"></div><div class="sep" style="left:760px;top:291px;width:1px;height:29px;background:#282828"></div><div class="t" style="left:696px;top:299.5px;font-size:10.6px;color:#e2e2e2">42</div><div class="a" style="left:738.5px;top:304.75px;width:12px;height:1.5px;background:#bdbdbd"></div><div class="a" style="left:769.5px;top:304.75px;width:12px;height:1.5px;background:#bdbdbd"></div><div class="a" style="left:774.75px;top:299.5px;width:1.5px;height:12px;background:#bdbdbd"></div>
<div class="ent" style="left:797px;top:290px;width:53px;height:31px;background:#303030"></div>
<div class="t" style="left:805px;top:300.2px;font-size:10.6px;color:#e2e2e2;">44.3300</div>
<div class="t" style="left:397px;top:335.2px;font-size:10.6px;color:#a8a8a8;width:200px;text-align:center">Déclinaison :</div>
<div class="ent" style="left:580px;top:325px;width:103px;height:30px;background:#303030"></div><div class="sep" style="left:620px;top:326px;width:1px;height:28px;background:#282828"></div><div class="sep" style="left:651px;top:326px;width:1px;height:28px;background:#282828"></div><div class="t" style="left:588px;top:334.0px;font-size:10.6px;color:#e2e2e2">41</div><div class="a" style="left:629.5px;top:339.25px;width:12px;height:1.5px;background:#bdbdbd"></div><div class="a" style="left:661.0px;top:339.25px;width:12px;height:1.5px;background:#bdbdbd"></div><div class="a" style="left:666.25px;top:334.0px;width:1.5px;height:12px;background:#bdbdbd"></div>
<div class="ent" style="left:688px;top:325px;width:103px;height:30px;background:#303030"></div><div class="sep" style="left:729px;top:326px;width:1px;height:28px;background:#282828"></div><div class="sep" style="left:760px;top:326px;width:1px;height:28px;background:#282828"></div><div class="t" style="left:696px;top:334.0px;font-size:10.6px;color:#e2e2e2">16</div><div class="a" style="left:738.5px;top:339.25px;width:12px;height:1.5px;background:#bdbdbd"></div><div class="a" style="left:769.5px;top:339.25px;width:12px;height:1.5px;background:#bdbdbd"></div><div class="a" style="left:774.75px;top:334.0px;width:1.5px;height:12px;background:#bdbdbd"></div>
<div class="ent" style="left:797px;top:325px;width:53px;height:30px;background:#303030"></div>
<div class="t" style="left:805px;top:335.2px;font-size:10.6px;color:#e2e2e2;">7.5000</div>
<div class="chk" style="left:858px;top:333px"></div>
<div class="t" style="left:876px;top:335.2px;font-size:10.6px;color:#a0a0a0;">S</div>
<div class="a" style="left:424px;top:361px;width:461px;height:89px;background:#2d2d2d;border:1px solid #1e1e1e"></div>
<div class="a" style="left:425px;top:362px;width:459px;height:21px;background:#2e2e2e"></div>
<div class="a" style="left:466px;top:362px;width:1px;height:21px;background:#282828"></div>
<div class="t" style="left:431px;top:367.2px;font-size:10.6px;color:#7e7e7e;font-weight:bold">Base</div>
<div class="t" style="left:472px;top:367.2px;font-size:10.6px;color:#7e7e7e;font-weight:bold">Nom</div>
<div class="a" style="left:425px;top:384px;width:459px;height:20px;background:#1b56a8"></div>
<div class="t" style="left:428px;top:389.2px;font-size:10.6px;color:#f2f2f2;">Simbad</div>
<div class="t" style="left:471px;top:389.2px;font-size:10.6px;color:#f2f2f2;">M  31</div>
<div class="btn" style="left:425px;top:455px;width:184px;height:30px;color:#bdbdbd">Obtenir Métadonnées de l'Image</div>
<div class="t" style="left:443px;top:500.2px;font-size:10.6px;color:#a8a8a8;">Longueur focale (mm) :</div>
<div class="ent" style="left:579px;top:490px;width:70px;height:29px;background:#303030"></div>
<div class="t" style="left:588px;top:500.2px;font-size:10.6px;color:#e8e8e8;">273.0</div>
<div class="t" style="left:734px;top:517.2px;font-size:10.6px;color:#a0a0a0;">Résolution :</div>
<div class="t" style="left:800px;top:517.2px;font-size:10.6px;color:#a0a0a0;">2.841</div>
<div class="t" style="left:452px;top:535.2px;font-size:10.6px;color:#a8a8a8;">Pixel</div>
<div class="a" style="left:424px;top:567px;width:462px;height:1px;background:#2a2a2a"></div>
<div class="chk" style="left:427px;top:581px"></div>
<div class="t" style="left:445px;top:584.2px;font-size:10.6px;color:#b4b4b4;">Forcer le recalcul</div>
<div class="chk" style="left:427px;top:605px"></div>
<div class="t" style="left:445px;top:607.2px;font-size:10.6px;color:#b4b4b4;">Sous-échantillonner si nécessaire</div>
<div class="t" style="left:600px;top:607.2px;font-size:10.6px;color:#b4b4b4;width:283px;text-align:right">Sous-échantillonner l'image si nécessaire</div>
<div class="chk on" style="left:427px;top:628px"></div><svg class="a" style="left:427px;top:628px" width="14" height="14"><path d="M3 7.2 L6 10 L11.2 4" fill="none" stroke="#fff" stroke-width="2.2"/></svg>
<div class="t" style="left:445px;top:631.2px;font-size:10.6px;color:#b4b4b4;">Recadrer automatiquement</div>
<div class="tri" style="left:427px;top:659px;border-top-color:#a9a9a9"></div>
<div class="t" style="left:438px;top:657.2px;font-size:10.6px;color:#b4b4b4;font-weight:bold">Paramètres du catalogue</div>
<div class="t" style="left:424px;top:697.2px;font-size:10.6px;color:#a8a8a8;">Catalogue photométrique :</div>
<div class="btn" style="left:558px;top:688px;width:106px;height:30px;justify-content:flex-start;padding-left:10px;color:#a8a8a8">NOMAD</div>
<div class="tri" style="left:642px;top:699px;border-top-color:#a9a9a9"></div>
<div class="t" style="left:672px;top:697.2px;font-size:10.6px;color:#a8a8a8;">(catalogue en ligne)</div>
<div class="t" style="left:424px;top:732.2px;font-size:10.6px;color:#a8a8a8;">Magnitude limite :</div>
<div class="ent" style="left:558px;top:723px;width:106px;height:30px;background:#303030"></div><div class="sep" style="left:600px;top:724px;width:1px;height:28px;background:#282828"></div><div class="sep" style="left:632px;top:724px;width:1px;height:28px;background:#282828"></div><div class="t" style="left:566px;top:732.0px;font-size:10.6px;color:#6a6a6a">12</div><div class="a" style="left:610.0px;top:737.25px;width:12px;height:1.5px;background:#5a5a5a"></div><div class="a" style="left:642.0px;top:737.25px;width:12px;height:1.5px;background:#5a5a5a"></div><div class="a" style="left:647.25px;top:732.0px;width:1.5px;height:12px;background:#5a5a5a"></div>
<div class="chk on" style="left:672px;top:730px"></div><svg class="a" style="left:672px;top:730px" width="14" height="14"><path d="M3 7.2 L6 10 L11.2 4" fill="none" stroke="#fff" stroke-width="2.2"/></svg>
<div class="t" style="left:690px;top:732.2px;font-size:10.6px;color:#b4b4b4;">Auto</div>
<div class="tri" style="left:427px;top:766px;border-top-color:#a9a9a9"></div>
<div class="t" style="left:438px;top:764.2px;font-size:10.6px;color:#b4b4b4;font-weight:bold">Détection d'étoiles</div>
<div class="chk" style="left:427px;top:779px"></div>
<div class="t" style="left:445px;top:781.2px;font-size:10.6px;color:#b4b4b4;">Détection manuelle</div>
<div class="tri" style="left:427px;top:809px;border-top-color:#a9a9a9"></div>
<div class="t" style="left:438px;top:807.2px;font-size:10.6px;color:#b4b4b4;font-weight:bold">Référence de fond du ciel</div>
<div class="chk on" style="left:427px;top:822px"></div><svg class="a" style="left:427px;top:822px" width="14" height="14"><path d="M3 7.2 L6 10 L11.2 4" fill="none" stroke="#fff" stroke-width="2.2"/></svg>
<div class="t" style="left:445px;top:824.2px;font-size:10.6px;color:#b4b4b4;">Auto-détection</div>
<div class="t" style="left:437px;top:842.2px;font-size:10.6px;color:#6a6a6a;width:200px;text-align:center">Zone sélectionnée</div>
<div class="ent" style="left:425px;top:860px;width:109px;height:29px;background:#303030"></div><div class="sep" style="left:472px;top:861px;width:1px;height:27px;background:#282828"></div><div class="sep" style="left:504px;top:861px;width:1px;height:27px;background:#282828"></div><div class="t" style="left:433px;top:868.5px;font-size:10.6px;color:#6a6a6a">0</div><div class="a" style="left:482.0px;top:873.75px;width:12px;height:1.5px;background:#5a5a5a"></div><div class="a" style="left:513.0px;top:873.75px;width:12px;height:1.5px;background:#5a5a5a"></div><div class="a" style="left:518.25px;top:868.5px;width:1.5px;height:12px;background:#5a5a5a"></div>
<div class="ent" style="left:540px;top:860px;width:111px;height:29px;background:#303030"></div><div class="sep" style="left:588px;top:861px;width:1px;height:27px;background:#282828"></div><div class="sep" style="left:619px;top:861px;width:1px;height:27px;background:#282828"></div><div class="t" style="left:548px;top:868.5px;font-size:10.6px;color:#6a6a6a">0</div><div class="a" style="left:597.5px;top:873.75px;width:12px;height:1.5px;background:#5a5a5a"></div><div class="a" style="left:629.0px;top:873.75px;width:12px;height:1.5px;background:#5a5a5a"></div><div class="a" style="left:634.25px;top:868.5px;width:1.5px;height:12px;background:#5a5a5a"></div>
<div class="ent" style="left:425px;top:895px;width:109px;height:29px;background:#303030"></div><div class="sep" style="left:472px;top:896px;width:1px;height:27px;background:#282828"></div><div class="sep" style="left:504px;top:896px;width:1px;height:27px;background:#282828"></div><div class="t" style="left:433px;top:903.5px;font-size:10.6px;color:#6a6a6a">0</div><div class="a" style="left:482.0px;top:908.75px;width:12px;height:1.5px;background:#5a5a5a"></div><div class="a" style="left:513.0px;top:908.75px;width:12px;height:1.5px;background:#5a5a5a"></div><div class="a" style="left:518.25px;top:903.5px;width:1.5px;height:12px;background:#5a5a5a"></div>
<div class="ent" style="left:540px;top:895px;width:111px;height:29px;background:#303030"></div><div class="sep" style="left:588px;top:896px;width:1px;height:27px;background:#282828"></div><div class="sep" style="left:619px;top:896px;width:1px;height:27px;background:#282828"></div><div class="t" style="left:548px;top:903.5px;font-size:10.6px;color:#6a6a6a">0</div><div class="a" style="left:597.5px;top:908.75px;width:12px;height:1.5px;background:#5a5a5a"></div><div class="a" style="left:629.0px;top:908.75px;width:12px;height:1.5px;background:#5a5a5a"></div><div class="a" style="left:634.25px;top:903.5px;width:1.5px;height:12px;background:#5a5a5a"></div>
<div class="btn" style="left:660px;top:866px;width:163px;height:30px;color:#6e6e6e;background:#323232">Utiliser la sélection courante</div>
<div class="btn" style="left:730px;top:932px;width:75px;height:29px;color:#c8c8c8">Fermer</div>
<div class="btn" style="left:810px;top:932px;width:74px;height:29px;background:#1a56a8;border-color:#1a56a8;color:#f0f0f0">OK</div>
<div class="dlg" style="left:472px;top:524px;width:370px;height:173px;border-radius:7px"></div>
<div class="a" style="left:472px;top:524px;width:370px;height:22px;background:#f0f0f0;border-radius:7px 7px 0 0"></div>
<svg class="a" style="left:475px;top:528px" width="15" height="15" viewBox="0 0 15 15"><defs><linearGradient id="ig" x1="0" y1="0" x2="0" y2="1"><stop offset="0" stop-color="#0f4a5a"/><stop offset="0.55" stop-color="#3040a0"/><stop offset="1" stop-color="#7440b0"/></linearGradient></defs><circle cx="7.5" cy="7.5" r="7" fill="#fafafa"/><path d="M1 9 L1.3 6 Q3 2 7.5 0.5 Q12 2 13.7 6 L14 9 H8.3 L7.5 8 L6.7 9 Z" fill="url(#ig)"/><path d="M5 3.5 Q4 5 5.5 6" fill="none" stroke="#c0d0e0" stroke-width=".9"/><circle cx="10" cy="4.5" r=".8" fill="#f0f0ff"/><circle cx="3.2" cy="6.5" r=".7" fill="#e0e0ff"/><circle cx="4.5" cy="7.8" r=".9" fill="#e8e8ff"/><path d="M9 8 L10.5 6.2" stroke="#e8e8ff" stroke-width="1"/></svg>
<svg class="a" style="left:823px;top:530px" width="10" height="10"><path d="M0.5 0.5 L9.5 9.5 M9.5 0.5 L0.5 9.5" stroke="#7a7a7a" stroke-width="1.1"/></svg>
<div class="t" style="left:504px;top:555.2px;font-size:12.9px;color:#a8a8a8;font-weight:bold">La résolution astrométrique a échoué. L'image n'a</div>
<div class="t" style="left:504px;top:573.2px;font-size:12.9px;color:#a8a8a8;font-weight:bold">pas pu être alignée sur les étoiles de référence.</div>
<div class="t" style="left:507px;top:598.2px;font-size:10.6px;color:#a8a8a8;">Aucune étoile n'a été extraite du catalogue en ligne. Cela peut</div>
<div class="t" style="left:507px;top:613.2px;font-size:10.6px;color:#a8a8a8;">signifier que les serveurs sont en panne. Notez que vous pouvez</div>
<div class="t" style="left:507px;top:629.2px;font-size:10.6px;color:#a8a8a8;">installer des catalogues locaux.</div>
<div class="btn" style="left:473px;top:666px;width:368px;height:30px;border-radius:0 0 6px 6px;color:#9c9c9c;background:#333">Valider</div></body></html>
